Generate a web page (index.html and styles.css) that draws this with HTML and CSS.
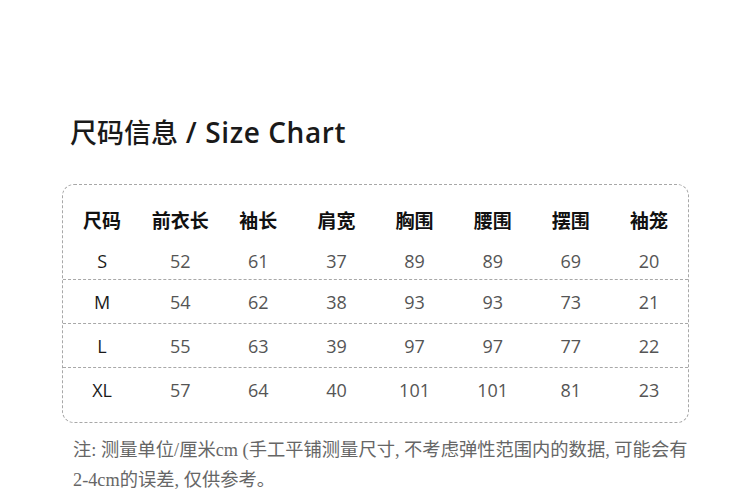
FILE: index.html
```html
<!DOCTYPE html>
<html lang="zh">
<head>
<meta charset="utf-8">
<title>尺码信息 / Size Chart</title>
<link rel="stylesheet" href="styles.css">
</head>
<body>
<div class="page">
  <h1 class="title"><span class="title-cn">尺码信息</span><span class="title-en"> / Size Chart</span></h1>
  <div class="chart">
    <div class="row head">
      <div class="cell">尺码</div><div class="cell">前衣长</div><div class="cell">袖长</div><div class="cell">肩宽</div><div class="cell">胸围</div><div class="cell">腰围</div><div class="cell">摆围</div><div class="cell">袖笼</div>
    </div>
    <div class="row data first">
      <div class="cell size">S</div><div class="cell">52</div><div class="cell">61</div><div class="cell">37</div><div class="cell">89</div><div class="cell">89</div><div class="cell">69</div><div class="cell">20</div>
    </div>
    <div class="row data">
      <div class="cell size">M</div><div class="cell">54</div><div class="cell">62</div><div class="cell">38</div><div class="cell">93</div><div class="cell">93</div><div class="cell">73</div><div class="cell">21</div>
    </div>
    <div class="row data">
      <div class="cell size">L</div><div class="cell">55</div><div class="cell">63</div><div class="cell">39</div><div class="cell">97</div><div class="cell">97</div><div class="cell">77</div><div class="cell">22</div>
    </div>
    <div class="row data last">
      <div class="cell size">XL</div><div class="cell">57</div><div class="cell">64</div><div class="cell">40</div><div class="cell">101</div><div class="cell">101</div><div class="cell">81</div><div class="cell">23</div>
    </div>
  </div>
  <p class="note">注: 测量单位/厘米cm (手工平铺测量尺寸, 不考虑弹性范围内的数据, 可能会有2-4cm的误差, 仅供参考。</p>
</div>
</body>
</html>
```

FILE: styles.css
```css
html, body {
  margin: 0;
  padding: 0;
  background: #ffffff;
}

.page {
  padding: 112px 61px 0 62px;
  width: 627px;
}

.title {
  margin: 0 0 32px 8px;
  height: 40px;
  line-height: 40px;
  font-family: "Open Sans", "Noto Sans CJK SC", sans-serif;
  font-size: 28px;
  font-weight: 600;
  color: #1a1a1a;
  white-space: nowrap;
}

.title-cn {
  font-family: "Noto Sans CJK SC", sans-serif;
  font-weight: 500;
  font-size: 27px;
}

.title-en {
  letter-spacing: 0.6px;
}

.chart {
  border: 1px dashed #a8a8a8;
  border-radius: 12px;
  padding: 11px 0 10px;
}

.row {
  display: grid;
  grid-template-columns: repeat(8, 1fr);
  align-items: center;
}

.row.head {
  height: 46px;
}

.row.data {
  height: 43px;
  border-bottom: 1px dashed #a8a8a8;
}

.row.data.first {
  height: 37px;
}

.row.data.last {
  height: 44px;
  border-bottom: none;
}

.cell {
  text-align: center;
  font-family: "Open Sans", sans-serif;
  font-size: 18px;
  color: #555555;
}

.head .cell {
  font-family: "Noto Sans CJK SC", sans-serif;
  font-weight: 700;
  font-size: 19px;
  color: #111111;
}

.cell.size {
  color: #1a1a1a;
}

.note {
  margin: 12px -8px 0 11px;
  font-family: "Liberation Serif", "Noto Sans CJK SC", serif;
  font-size: 18.3px;
  line-height: 30px;
  color: #666666;
}
```
